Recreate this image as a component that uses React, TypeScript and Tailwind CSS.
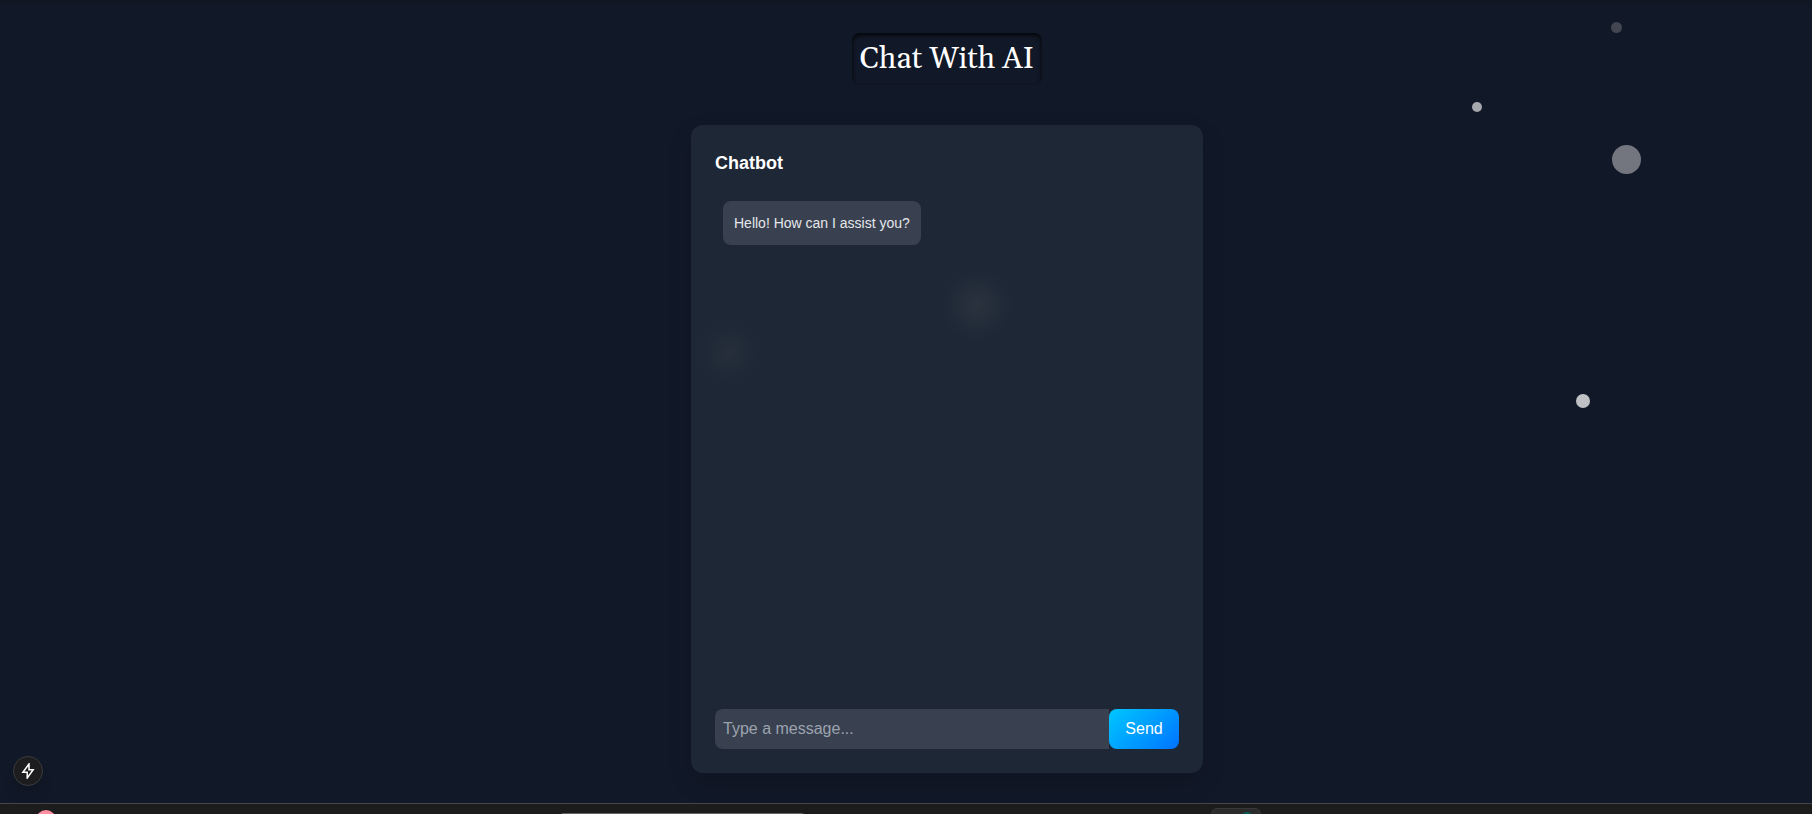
import { useState } from "react";

const dots = [
  "left-[1611px] top-[22px] size-[11px] bg-[#424651]",
  "left-[1472px] top-[102px] size-[10px] bg-[#a7a8ae]",
  "left-[1612px] top-[145px] size-[29px] bg-[#73767f]",
  "left-[1576px] top-[394px] size-[14px] bg-[#c0c1c5]",
];

function Background() {
  return (
    <div aria-hidden="true" className="pointer-events-none absolute inset-0">
      {dots.map((dot) => (
        <span key={dot} className={`absolute rounded-full ${dot}`} />
      ))}
    </div>
  );
}

function Chat() {
  const [draft, setDraft] = useState("");
  return (
    <section className="relative flex w-full max-w-lg flex-1 flex-col rounded-xl bg-[#1e2735] p-6 shadow-[0_10px_25px_rgba(0,0,0,0.14)]">
      <span className="pointer-events-none absolute left-[246px] top-[140px] size-20 rounded-full bg-[radial-gradient(circle,#29323d_0%,#252e3a_25%,#202937_48%,#1e273500_66%)]" />
      <span className="pointer-events-none absolute left-0 top-[190px] size-[76px] rounded-full bg-[radial-gradient(circle,#252e3a_0%,#222b38_25%,#1f2836_48%,#1e273500_66%)]" />
      <h2 className="text-lg font-bold text-white">Chatbot</h2>
      <div className="relative flex flex-1 flex-col items-start px-2 pt-6">
        <p className="rounded-lg bg-[#394150] px-[11px] py-3 text-sm text-[#e5e7eb]">
          Hello! How can I assist you?
        </p>
      </div>
      <form className="flex h-10" onSubmit={(e) => e.preventDefault()}>
        <input
          aria-label="Message"
          value={draft}
          onChange={(e) => setDraft(e.target.value)}
          placeholder="Type a message..."
          className="min-w-0 flex-1 rounded-l-lg bg-[#394150] px-2 text-base text-white outline-none placeholder:text-[#9ca3af]"
        />
        <button
          type="submit"
          className="w-[70px] rounded-lg bg-linear-135 from-[#00c6ff] to-[#0072ff] text-base text-white"
        >
          Send
        </button>
      </form>
    </section>
  );
}

function BottomBar() {
  return (
    <footer aria-hidden="true" className="relative h-[11px] overflow-hidden border-t border-[#444348] bg-[#1c1c1c]">
      <span className="absolute left-[36px] top-[6px] size-5 rounded-full bg-[#ff8fa0]" />
      <span className="absolute left-[560px] top-[9px] h-1 w-[245px] rounded-t-sm bg-[#666265]" />
      <span className="absolute left-[1211px] top-[4px] h-5 w-[50px] rounded-md border border-[#383838] bg-[#2b2b2b]" />
      <span className="absolute left-[1241px] top-[8px] size-3 rounded-full bg-[#075e54]" />
    </footer>
  );
}

export default function App() {
  return (
    <div className="relative flex min-h-screen flex-col overflow-hidden bg-[#111827] font-['Liberation_Sans',Arial,sans-serif]">
      <Background />
      <div className="absolute inset-x-0 top-0 h-2 bg-linear-to-b from-[#101722] to-transparent" />
      <main className="flex flex-1 flex-col items-center pb-[30px] pl-[82px] pt-[33px]">
        <h1 className="mb-10 rounded-lg p-2 font-['Gelasio','Georgia','Liberation_Serif',serif] text-3xl font-normal text-white shadow-[inset_0_2px_4px_rgba(0,0,0,0.9)]">
          Chat With AI
        </h1>
        <Chat />
      </main>
      <button
        type="button"
        aria-label="Open dev tools"
        className="absolute bottom-[28px] left-[13px] flex size-[30px] items-center justify-center rounded-full border border-[#3c3c3e] bg-[#1d1d1f] text-white shadow-lg"
      >
        <svg viewBox="0 0 16 16" className="size-4" fill="none" stroke="currentColor" strokeWidth="1.5">
          <path d="M9 1 2.9 9.3h4.3v5.7L13.2 6.7H9z" />
        </svg>
      </button>
      <BottomBar />
    </div>
  );
}
